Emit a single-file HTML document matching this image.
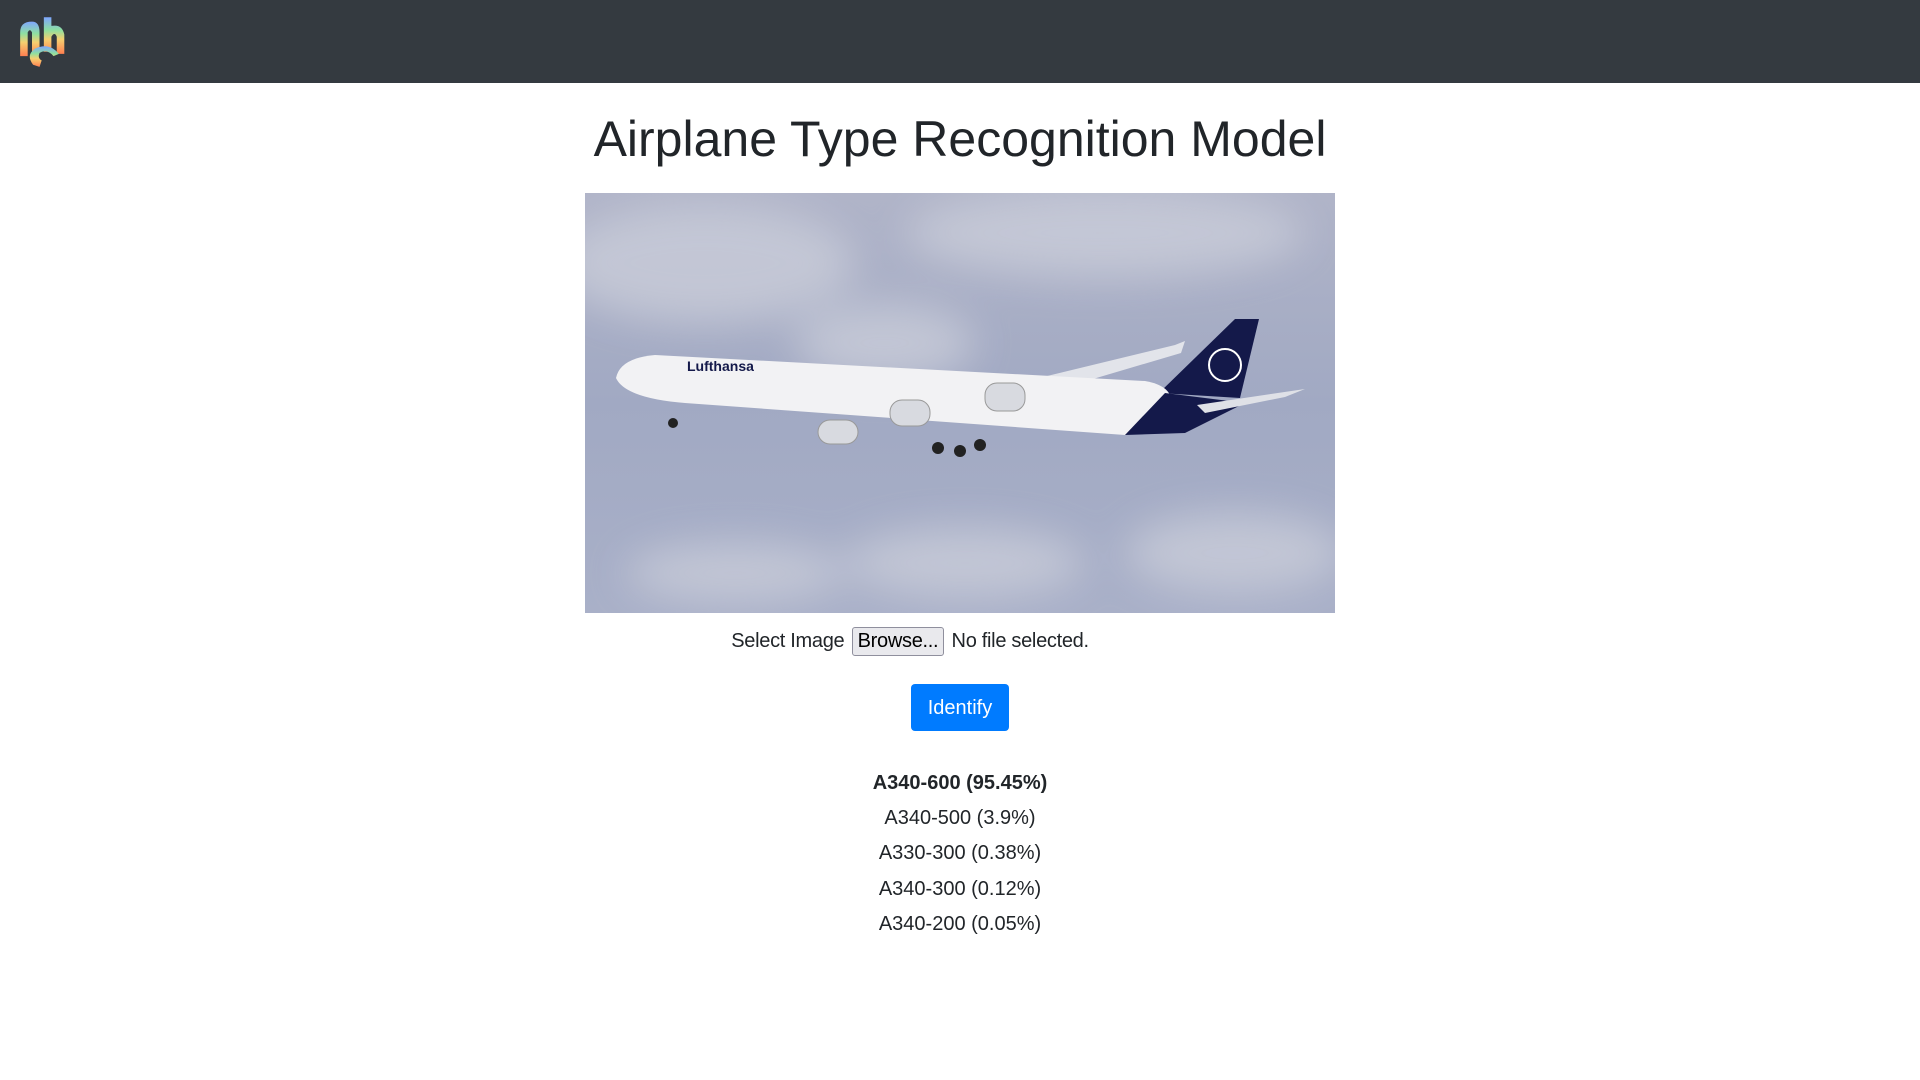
<!DOCTYPE html>
<html><head><meta charset="utf-8"><style>
*{box-sizing:border-box}
body{margin:0;width:1920px;height:1080px;background:#fff;font-family:"Segoe UI","Liberation Sans",sans-serif;color:#212529;overflow:hidden}
.nav{height:83px;background:#343a40;position:relative}
h1{margin:0;position:absolute;top:109px;width:100%;text-align:center;font-weight:400;font-size:50px;line-height:60px}
.img{position:absolute;left:585px;top:193px;width:750px;height:420px}
.sel{position:absolute;top:626px;left:0;width:1920px;padding-right:100px;text-align:center;font-size:20px;line-height:30px;letter-spacing:-0.3px}
.browse{display:inline-block;border:1px solid #8f8f9d;background:#e9e9ed;border-radius:3px;padding:0 5px;color:#000;line-height:27px;margin:0 2px}
.btn{position:absolute;left:911px;top:684px;width:98px;height:47px;background:#007bff;color:#fff;border-radius:4px;font-size:20px;text-align:center;line-height:49px}
.res{position:absolute;top:766px;width:100%;text-align:center;font-size:20px;line-height:35.2px}
</style></head><body>
<div class="nav">
<svg style="position:absolute;left:18px;top:15px" width="56" height="52" viewBox="0 0 52 48">
<defs><linearGradient id="g" x1="0" y1="0" x2="0" y2="1"><stop offset="0" stop-color="#7fa6ff"/><stop offset=".35" stop-color="#8ee0a0"/><stop offset=".6" stop-color="#f5d070"/><stop offset="1" stop-color="#ff7f50"/></linearGradient></defs>
<path d="M2 38 V16 Q2 6 13 6 Q20 6 20 16 V34 H13 V16 Q11 12 9 16 V38Z" fill="url(#g)"/>
<path d="M24 34 V2 H31 V10 Q41 8 43 18 V36 H36 V20 Q34 15 31 20 V34Z" fill="url(#g)"/>
<path d="M14 46 Q7 37 16 31 Q29 25 38 36 L33 38 Q27 31 20 35 Q18 40 22 42 L20 48Z" fill="url(#g)"/>
</svg></div>
<h1>Airplane Type Recognition Model</h1>
<svg class="img" viewBox="0 0 750 420">
<defs><linearGradient id="sky" x1="0" y1="0" x2="0" y2="1"><stop offset="0" stop-color="#b0b4c8"/><stop offset=".5" stop-color="#a1a9c3"/><stop offset="1" stop-color="#a9b0c8"/></linearGradient>
<filter id="b"><feGaussianBlur stdDeviation="20"/></filter></defs>
<rect width="750" height="420" fill="url(#sky)"/>
<g filter="url(#b)" fill="#c9ccd9" opacity=".8">
<ellipse cx="120" cy="70" rx="150" ry="60"/><ellipse cx="520" cy="40" rx="200" ry="45"/><ellipse cx="300" cy="150" rx="90" ry="40"/>
<ellipse cx="380" cy="370" rx="120" ry="35"/><ellipse cx="650" cy="360" rx="110" ry="40"/><ellipse cx="150" cy="380" rx="110" ry="30"/>
</g>
<path d="M392 200 L590 152 L600 148 L596 160 L420 212Z" fill="#e2e4ea"/>
<path d="M574 200 L650 126 L674 126 L655 205Z" fill="#14194a"/>
<circle cx="640" cy="172" r="16" fill="none" stroke="#fff" stroke-width="2"/>
<path d="M31 185 Q35 165 70 162 L560 188 Q600 195 580 230 L540 242 L100 210 Q40 205 31 185Z" fill="#f2f2f4"/>
<path d="M580 200 L660 210 L600 240 L540 242Z" fill="#14194a"/>
<path d="M612 212 L720 196 L700 204 L620 220Z" fill="#dfe1e7"/>
<text x="102" y="178" font-family="Liberation Sans" font-weight="bold" font-size="14" fill="#14194a">Lufthansa</text>
<g fill="#d8dae0" stroke="#999" stroke-width="1">
<rect x="400" y="190" width="40" height="28" rx="12"/><rect x="305" y="207" width="40" height="26" rx="12"/><rect x="233" y="227" width="40" height="24" rx="12"/></g>
<g fill="#222"><circle cx="353" cy="255" r="6"/><circle cx="375" cy="258" r="6"/><circle cx="395" cy="252" r="6"/><circle cx="88" cy="230" r="5"/></g>
</svg>
<div class="sel">Select Image <span class="browse">Browse...</span> No file selected.</div>
<div class="btn">Identify</div>
<div class="res"><b>A340-600 (95.45%)</b><br>A340-500 (3.9%)<br>A330-300 (0.38%)<br>A340-300 (0.12%)<br>A340-200 (0.05%)</div>
</body></html>
